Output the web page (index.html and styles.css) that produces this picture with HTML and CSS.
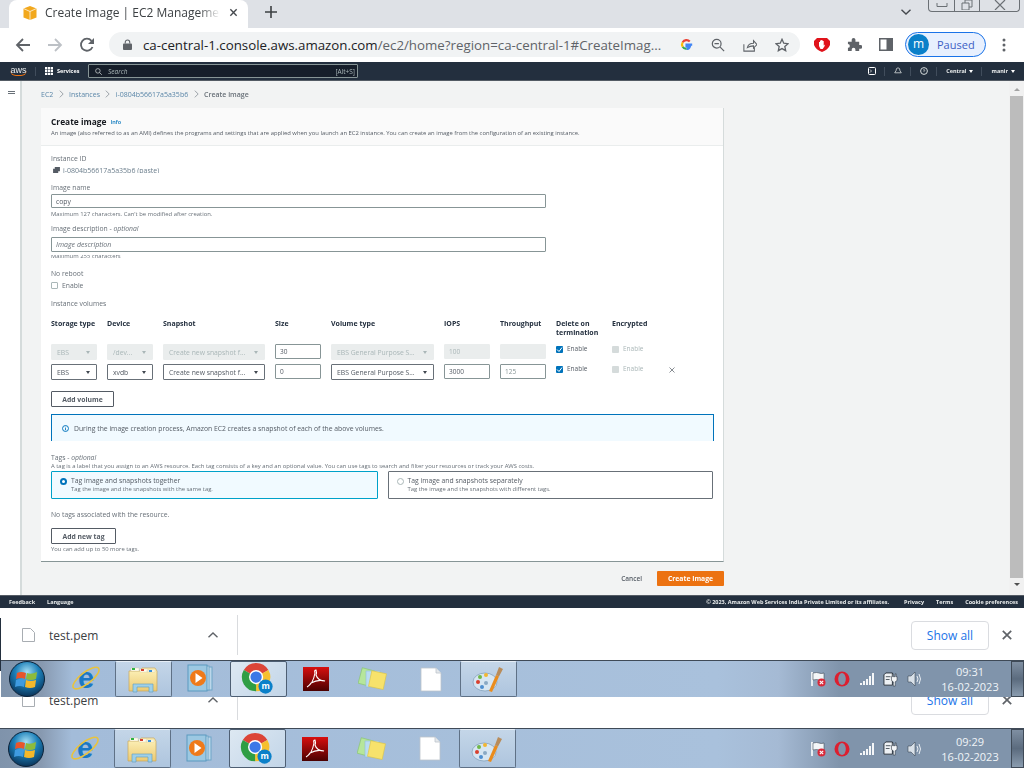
FILE: index.html
```html
<!DOCTYPE html>
<html lang="en">
<head>
<meta charset="utf-8">
<title>Create Image | EC2 Management Console</title>
<link rel="stylesheet" href="styles.css">
</head>
<body>
<svg class="defs" aria-hidden="true">
  <defs>
    <radialGradient id="orb" cx="50%" cy="30%" r="75%"><stop offset="0" stop-color="#a5def4"/><stop offset=".45" stop-color="#1b7fb8"/><stop offset="1" stop-color="#08294c"/></radialGradient>
    <linearGradient id="pdf" x1="0" y1="0" x2="0" y2="1"><stop offset="0" stop-color="#d80f0f"/><stop offset="1" stop-color="#4a0000"/></linearGradient>
    <linearGradient id="fold" x1="0" y1="0" x2="0" y2="1"><stop offset="0" stop-color="#fdf3bd"/><stop offset="1" stop-color="#ecca72"/></linearGradient>
    <symbol id="i-orb" viewBox="0 0 36 36">
      <circle cx="18" cy="18" r="17.500" fill="url(#orb)" stroke="#0c2238"/>
      <path d="M8 12q4-2 9 0l-1 6q-4-2-9 0z" fill="#e8552b"/><path d="M18 12q4 2 10-1l-1 7q-5 2-10 0z" fill="#8dbb3c"/>
      <path d="M7 19q4-2 9 0l-1 7q-4-2-9 0z" fill="#3f9be0"/><path d="M17 19q4 2 10 0l-1 7q-5 2-10 0z" fill="#f5b82a"/>
    </symbol>
    <symbol id="i-ie" viewBox="0 0 32 32">
      <text x="16" y="26" text-anchor="middle" class="svg-e">e</text>
      <ellipse cx="16" cy="15" rx="17" ry="6" transform="rotate(-38 16 15)" fill="none" stroke="#e9c33c" stroke-width="1.700"/>
    </symbol>
    <symbol id="i-folder" viewBox="0 0 30 28">
      <path d="M1 6h11l2-3h13l2 3v20H1z" fill="url(#fold)" stroke="#c9a85a" stroke-width=".7"/>
      <path d="M3 3h8v3H3zM12 4h8v3h-8zM19 5h8v2h-8z" fill="#fffdf0" stroke="#d5c9a0" stroke-width=".4"/>
      <rect x="4" y="3" width="3" height="2" fill="#2fb344"/><rect x="13" y="4" width="3" height="2" fill="#d8402e"/><rect x="21" y="5" width="3" height="2" fill="#3a8fd8"/>
      <path d="M5 19h20v8h-4v-5H9v5H5z" fill="#9fd0e8" stroke="#5c9cc0" stroke-width=".6"/>
    </symbol>
    <symbol id="i-wmp" viewBox="0 0 28 30">
      <rect x="8" y="3" width="17" height="23" fill="#bcd7ea" stroke="#6ea6c8"/><rect x="5" y="2" width="17" height="24" fill="#cde2f0" stroke="#6ea6c8"/>
      <rect x="1" y="1" width="19" height="26" fill="#9cc8e2" stroke="#5b9abf"/>
      <circle cx="11" cy="14" r="8" fill="#ef7a1a"/><path d="M8.500 9l7 5-7 5z" fill="#fff"/>
    </symbol>
    <symbol id="i-chrome" viewBox="0 0 36 36">
      <path d="M16 16L3 8.500A15 15 0 0 1 29 8.500Z" fill="#dc4437"/><path d="M16 16L29 8.500A15 15 0 0 1 16 31Z" fill="#f6c02d"/><path d="M16 16L16 31A15 15 0 0 1 3 8.500Z" fill="#2f9e44"/>
      <circle cx="16" cy="16" r="7.500" fill="#fff"/><circle cx="16" cy="16" r="6" fill="#3b78e7"/>
      <circle cx="26" cy="26" r="7.500" fill="#0b80c9"/><text x="26" y="29" text-anchor="middle" class="svg-m">m</text>
    </symbol>
    <symbol id="i-pdf" viewBox="0 0 26 24">
      <rect width="26" height="24" fill="url(#pdf)"/><path d="M4 20q6-3 8-14q-1-3 1-3q1 3 0 5q2 6 9 6q-7-2-14 2q-2 3-4 4z" fill="none" stroke="#fff" stroke-width="1.100"/>
    </symbol>
    <symbol id="i-sticky" viewBox="0 0 30 28">
      <rect x="2" y="4" width="13" height="16" transform="rotate(15 8 12)" fill="#b6e69b" stroke="#86c46e" stroke-width=".6"/>
      <rect x="8" y="6" width="14" height="16" fill="#b9dcf2" stroke="#8fbcd8" stroke-width=".6"/>
      <rect x="12" y="7" width="15" height="16" transform="rotate(12 19 15)" fill="#f7e26b" stroke="#dcc446" stroke-width=".6"/>
    </symbol>
    <symbol id="i-file" viewBox="0 0 22 25">
      <path d="M1 1h15l5 5v18H1z" fill="#fff" stroke="#bcc4cc" stroke-width=".8"/><path d="M16 1v5h5" fill="#e4e8ec" stroke="#bcc4cc" stroke-width=".8"/>
    </symbol>
    <symbol id="i-paint" viewBox="0 0 32 28">
      <ellipse cx="13" cy="17" rx="12" ry="9" fill="#d7e6f2" stroke="#7d9cb6" stroke-width=".7"/>
      <circle cx="6" cy="17" r="2" fill="#d8402e"/><circle cx="8" cy="12" r="2" fill="#6fb84a"/><circle cx="14" cy="10" r="2" fill="#f2b632"/><circle cx="14" cy="18" r="2" fill="#8aa9c4"/><circle cx="10" cy="22" r="2" fill="#4f8fd0"/>
      <path d="M17 26L24 10l3 1.500L20 27z" fill="#e98c1e"/><path d="M24 10l3-8 4 2-4 7.500z" fill="#b98c5a"/>
    </symbol>
    <symbol id="i-flag" viewBox="0 0 16 16">
      <path d="M2 1v14" stroke="#fff" stroke-width="1.600"/><path d="M3 2q4-1 6 0t5 0v7q-3 1-5 0t-6 0z" fill="#f4f6f8" stroke="#2b3440" stroke-width=".5"/>
      <circle cx="11.500" cy="11.500" r="4" fill="#d8293a"/><path d="M9.800 9.800l3.400 3.400M13.200 9.800l-3.400 3.400" stroke="#fff" stroke-width="1.100"/>
    </symbol>
    <symbol id="i-opera" viewBox="0 0 16 16"><circle cx="8" cy="8" r="7.500" fill="#dc1f2f"/><ellipse cx="8" cy="8" rx="3.800" ry="6" fill="#8193a9"/></symbol>
    <symbol id="i-signal" viewBox="0 0 16 12"><path d="M1 10h2v2H1zM4 8h2v4H4zM7 6h2v6H7zM10 3h2v9h-2zM13 0h2v12h-2z" fill="#f4f6f8"/></symbol>
    <symbol id="i-power" viewBox="0 0 16 16"><path d="M1 3l2-2h7v13H1z" fill="#eef2f5" stroke="#27303a"/><path d="M3 5h5M3 8h4" stroke="#27303a" stroke-width=".8"/><path d="M9 5h1V2h1v3h2V2h1v3h1v4l-2 1.500V15h-2v-4.500L9 9z" fill="#f4f6f8" stroke="#27303a" stroke-width=".6"/></symbol>
    <symbol id="i-sound" viewBox="0 0 16 14"><path d="M1 4h3l4-4v14l-4-4H1z" fill="#d8e0e8" stroke="#2b3440" stroke-width=".5"/><path d="M10 4q2 3 0 6M12 2q3 5 0 10" fill="none" stroke="#e8edf2" stroke-width="1"/></symbol>
  </defs>
</svg>
<i class="edge"></i>

<header class="tabstrip">
  <div class="tab">
    <svg class="tab-icon" viewBox="0 0 16 16"><path d="M8 1l6.500 2.500v9L8 15l-6.500-2.500v-9z" fill="#f2a81d"/><path d="M8 6.500V15M1.500 3.500L8 6.500l6.500-3" stroke="#fff" stroke-width=".7" fill="none"/></svg>
    <span class="tab-title">Create Image | EC2 Management Console</span>
    <svg class="tab-close" viewBox="0 0 10 10"><path d="M1.500 1.500l7 7M8.500 1.500l-7 7" stroke="#45494e" stroke-width="1.500"/></svg>
  </div>
  <svg class="new-tab" viewBox="0 0 12 12"><path d="M6 0v12M0 6h12" stroke="#3c4043" stroke-width="1.600"/></svg>
  <svg class="tab-search" viewBox="0 0 10 6"><path d="M.5 .8L5 5l4.500-4.200" fill="none" stroke="#45494e" stroke-width="1.400"/></svg>
  <div class="winctl">
    <span class="winbtn winbtn-first"><svg viewBox="0 0 12 6"><path d="M1 1v3.500h10V1" fill="none" stroke="#6b7075"/></svg></span>
    <span class="winbtn"><svg viewBox="0 0 12 10"><path d="M1 3h7v7H1zM4 3V0h7v7H8" fill="none" stroke="#6b7075"/></svg></span>
    <span class="winbtn winbtn-wide"><svg viewBox="0 0 12 10"><path d="M1 0l10 10M11 0L1 10" stroke="#6b7075" stroke-width="1.200"/></svg></span>
  </div>
</header>

<nav class="toolbar">
  <svg class="tb-icon tb-back" viewBox="0 0 16 16"><path d="M15 8H2M8 2L2 8l6 6" fill="none" stroke="#5f6368" stroke-width="1.800"/></svg>
  <svg class="tb-icon tb-fwd" viewBox="0 0 16 16"><path d="M1 8h13M8 2l6 6-6 6" fill="none" stroke="#bdc1c6" stroke-width="1.800"/></svg>
  <svg class="tb-icon tb-reload" viewBox="0 0 16 16"><path d="M13.500 10A6 6 0 1 1 12.500 3.800" fill="none" stroke="#5f6368" stroke-width="1.800"/><path d="M15 1v6H9z" fill="#5f6368"/></svg>
  <div class="omnibox">
    <svg class="lock" viewBox="0 0 10 12"><path d="M2.500 5V3.500a2.500 2.500 0 0 1 5 0V5" fill="none" stroke="#5f6368" stroke-width="1.200"/><rect y="5" width="10" height="7" rx="1" fill="#5f6368"/></svg>
    <span class="url"><b class="url-host">ca-central-1.console.aws.amazon.com</b>/ec2/home?region=ca-central-1#CreateImag...</span>
    <svg class="omni-g" viewBox="0 0 16 16"><path d="M15 8.200H8v2.600h4A4.200 4.200 0 0 1 8 13.500" fill="none" stroke="#4285f4" stroke-width="2.600"/><path d="M8 13.500A5.500 5.500 0 0 1 3.300 10.800" fill="none" stroke="#34a853" stroke-width="2.600"/><path d="M3.300 10.800a5.500 5.500 0 0 1 0-5.600" fill="none" stroke="#fbbc05" stroke-width="2.600"/><path d="M3.300 5.200A5.500 5.500 0 0 1 12 4.300" fill="none" stroke="#ea4335" stroke-width="2.600"/></svg>
    <svg class="omni-i" viewBox="0 0 16 16"><circle cx="6.500" cy="6.500" r="5" fill="none" stroke="#5f6368" stroke-width="1.400"/><path d="M10.500 10.500L15 15M4 6.500h5" stroke="#5f6368" stroke-width="1.400"/></svg>
    <svg class="omni-i" viewBox="0 0 16 16"><path d="M1 7v8h12v-4M5 11q1-5 7-5V3l4 4.500-4 4V9q-4 0-7 2z" fill="none" stroke="#5f6368" stroke-width="1.200"/></svg>
    <svg class="omni-i" viewBox="0 0 16 16"><path d="M8 1.500l2 4.500 4.800.5-3.600 3.200 1 4.800L8 12.100l-4.200 2.400 1-4.800L1.200 6.500 6 6z" fill="none" stroke="#5f6368" stroke-width="1.500"/></svg>
  </div>
  <svg class="ext ext-ub" viewBox="0 0 16 14"><path d="M3 0h10l3 3v4q-2 5-8 7q-6-2-8-7V3z" fill="#e0131b"/><path d="M5 8V4h1v2.500V2.500h1.200V6V2h1.300v4V3h1.200v4.500l1-1v1.500l-2 3H6.500z" fill="#fff"/></svg>
  <svg class="ext ext-puzzle" viewBox="0 0 16 16"><path d="M1 5h4V3a2 2 0 0 1 4 0v2h4v3.500h1.500a2 2 0 0 1 0 4H13V15H9v-1.500a2 2 0 0 0-4 0V15H1v-3.500a2 2 0 0 0 0-4z" fill="#5f6368"/></svg>
  <svg class="ext ext-panel" viewBox="0 0 14 13"><path d="M0 0h14v13H0z" fill="#5f6368"/><path d="M1.500 1.500h6v10h-6z" fill="#fff"/></svg>
  <div class="profile"><span class="avatar">m</span><span class="paused">Paused</span></div>
  <svg class="kebab" viewBox="0 0 4 14"><circle cx="2" cy="2" r="1.500" fill="#5f6368"/><circle cx="2" cy="7" r="1.500" fill="#5f6368"/><circle cx="2" cy="12" r="1.500" fill="#5f6368"/></svg>
</nav>

<div class="aws-nav">
  <span class="aws-logo">aws</span>
  <i class="nav-sep nav-sep-logo"></i>
  <svg class="grid-icon" viewBox="0 0 9 9"><path d="M0 0h2.500v2.500H0zM3.200 0h2.500v2.500H3.200zM6.400 0H9v2.500H6.400zM0 3.200h2.500v2.500H0zM3.200 3.200h2.500v2.500H3.200zM6.400 3.200H9v2.500H6.400zM0 6.400h2.500V9H0zM3.200 6.400h2.500V9H3.200zM6.400 6.400H9V9H6.400z" fill="#fff"/></svg>
  <span class="nav-services">Services</span>
  <div class="nav-search">
    <svg class="nav-search-icon" viewBox="0 0 8 8"><circle cx="3.300" cy="3.300" r="2.600" fill="none" stroke="#d5dbdb" stroke-width=".8"/><path d="M5.200 5.200L7.800 7.800" stroke="#d5dbdb" stroke-width=".8"/></svg>
    <span class="nav-search-ph">Search</span>
    <span class="nav-search-key">[Alt+S]</span>
  </div>
  <div class="nav-right">
    <svg class="nav-ico" viewBox="0 0 8 8"><rect x=".5" y=".5" width="7" height="7" rx="1" fill="none" stroke="#fff"/><path d="M2 2.500L3.500 4 2 5.500" fill="none" stroke="#fff" stroke-width=".7"/></svg>
    <i class="nav-sep"></i>
    <svg class="nav-ico" viewBox="0 0 8 8"><path d="M4 .8q2 0 2 3l1.300 2H.7L2 3.800q0-3 2-3z" fill="none" stroke="#d5dbdb" stroke-width=".8"/></svg>
    <i class="nav-sep"></i>
    <svg class="nav-ico" viewBox="0 0 8 8"><circle cx="4" cy="4" r="3.400" fill="none" stroke="#d5dbdb"/><path d="M3 3.200q1-1.200 2 0l-1 1.300v.6" fill="none" stroke="#d5dbdb" stroke-width=".7"/></svg>
    <i class="nav-sep"></i>
    <span class="nav-menu">Central<i class="nav-caret"></i></span>
    <i class="nav-sep"></i>
    <span class="nav-menu">manir<i class="nav-caret"></i></span>
  </div>
</div>

<div class="console">
  <aside class="sidenav"><i class="burger"></i></aside>
  <main class="content">
    <div class="crumbs">
      <a class="crumb">EC2</a><svg class="crumb-sep" viewBox="0 0 6 9"><path d="M1 .5l4 4-4 4" fill="none" stroke="#8a9299"/></svg>
      <a class="crumb">Instances</a><svg class="crumb-sep" viewBox="0 0 6 9"><path d="M1 .5l4 4-4 4" fill="none" stroke="#8a9299"/></svg>
      <a class="crumb">i-0804b56617a5a35b6</a><svg class="crumb-sep" viewBox="0 0 6 9"><path d="M1 .5l4 4-4 4" fill="none" stroke="#8a9299"/></svg>
      <span class="crumb-now">Create image</span>
    </div>
    <section class="panel">
      <div class="panel-head">
        <h1 class="panel-title">Create image <a class="info">Info</a></h1>
        <p class="panel-desc">An image (also referred to as an AMI) defines the programs and settings that are applied when you launch an EC2 instance. You can create an image from the configuration of an existing instance.</p>
      </div>
      <div class="panel-body">
        <div class="label">Instance ID</div>
        <div class="instance-val"><svg class="copy-ico" viewBox="0 0 8 7"><path d="M2 0h6v5H6v2H0V2h2z" fill="#545b64"/></svg><span class="instance-id">i-0804b56617a5a35b6 (paste)</span></div>
        <div class="label label-name">Image name</div>
        <div class="input input-name">copy</div>
        <div class="hint hint-name">Maximum 127 characters. Can't be modified after creation.</div>
        <div class="label label-desc">Image description - <em>optional</em></div>
        <div class="input input-desc"><em>Image description</em></div>
        <div class="hint hint-clip"><span>Maximum 255 characters</span></div>
        <div class="label label-reboot">No reboot</div>
        <label class="check-row"><i class="box"></i>Enable</label>
        <div class="label label-vol">Instance volumes</div>

        <div class="vol-grid">
          <div class="th">Storage type</div><div class="th">Device</div><div class="th">Snapshot</div><div class="th">Size</div><div class="th">Volume type</div><div class="th">IOPS</div><div class="th">Throughput</div><div class="th">Delete on termination</div><div class="th">Encrypted</div><div></div>

          <div class="sel off"><span>EBS</span><i></i></div><div class="sel off"><span>/dev...</span><i></i></div><div class="sel off"><span>Create new snapshot f...</span><i></i></div><div class="num">30</div><div class="sel off"><span>EBS General Purpose S...</span><i></i></div><div class="num off">100</div><div class="num off"></div>
          <div class="cb"><i class="tick"><svg viewBox="0 0 7 7"><path d="M1 3.500l2 2 3-4" fill="none" stroke="#fff"/></svg></i>Enable</div><div class="cb cb-off"><i class="dis"></i>Enable</div><div></div>

          <div class="sel"><span>EBS</span><i></i></div><div class="sel"><span>xvdb</span><i></i></div><div class="sel"><span>Create new snapshot f...</span><i></i></div><div class="num">0</div><div class="sel"><span>EBS General Purpose S...</span><i></i></div><div class="num">3000</div><div class="num muted">125</div>
          <div class="cb"><i class="tick"><svg viewBox="0 0 7 7"><path d="M1 3.500l2 2 3-4" fill="none" stroke="#fff"/></svg></i>Enable</div><div class="cb cb-off"><i class="dis"></i>Enable</div><div class="rm"><svg viewBox="0 0 6 6"><path d="M.5 .5l5 5M5.500 .5l-5 5" stroke="#545b64" stroke-width=".7"/></svg></div>
        </div>

        <button class="btn btn-vol">Add volume</button>
        <div class="flash"><svg class="flash-ico" viewBox="0 0 8 8"><circle cx="4" cy="4" r="3.400" fill="none" stroke="#0073bb" stroke-width="1.100"/><path d="M4 3.500V6M4 2v.8" stroke="#0073bb"/></svg>During the image creation process, Amazon EC2 creates a snapshot of each of the above volumes.</div>

        <div class="label label-tags">Tags - <em>optional</em></div>
        <div class="hint hint-tags">A tag is a label that you assign to an AWS resource. Each tag consists of a key and an optional value. You can use tags to search and filter your resources or track your AWS costs.</div>
        <div class="tiles">
          <div class="tile tile-on"><i class="radio radio-on"></i><div><div class="tile-title">Tag image and snapshots together</div><div class="tile-sub">Tag the image and the snapshots with the same tag.</div></div></div>
          <div class="tile"><i class="radio"></i><div><div class="tile-title">Tag image and snapshots separately</div><div class="tile-sub">Tag the image and the snapshots with different tags.</div></div></div>
        </div>
        <div class="no-tags">No tags associated with the resource.</div>
        <button class="btn btn-tag">Add new tag</button>
        <div class="hint hint-more">You can add up to 50 more tags.</div>
      </div>
    </section>
    <div class="actions"><a class="cancel">Cancel</a><button class="primary">Create Image</button></div>
  </main>
  <div class="scrollbar"><i class="sb-up"></i><i class="sb-thumb"></i><i class="sb-down"></i></div>
</div>

<footer class="aws-foot">
  <span>Feedback</span><span class="foot-lang">Language</span>
  <span class="foot-copy">© 2023, Amazon Web Services India Private Limited or its affiliates.</span>
  <span class="foot-link">Privacy</span><span class="foot-link2">Terms</span><span class="foot-link2">Cookie preferences</span>
</footer>

<div class="downloads">
  <svg class="dl-file" viewBox="0 0 13 14"><path d="M.5 .5h8l4 4v9H.5z" fill="#fff" stroke="#a8adb2"/></svg>
  <span class="dl-name">test.pem</span>
  <svg class="dl-chev" viewBox="0 0 10 6"><path d="M.5 5.200L5 1l4.500 4.200" fill="none" stroke="#5f6368" stroke-width="1.400"/></svg>
  <i class="dl-sep"></i>
  <span class="showall">Show all</span>
  <svg class="dl-x" viewBox="0 0 10 10"><path d="M.8 .8l8.400 8.400M9.200 .8L.8 9.200" stroke="#5f6368" stroke-width="1.700"/></svg>
</div>

<div class="taskbar taskbar-a">
  <svg class="orb"><use href="#i-orb"/></svg>
  <div class="tb-apps">
    <span class="app"><svg class="ico-ie"><use href="#i-ie"/></svg></span>
    <span class="app app-open"><svg class="ico-folder"><use href="#i-folder"/></svg></span>
    <span class="app"><svg class="ico-wmp"><use href="#i-wmp"/></svg></span>
    <span class="app app-active"><svg class="ico-chrome"><use href="#i-chrome"/></svg></span>
    <span class="app"><svg class="ico-pdf"><use href="#i-pdf"/></svg></span>
    <span class="app"><svg class="ico-sticky"><use href="#i-sticky"/></svg></span>
    <span class="app"><svg class="ico-file"><use href="#i-file"/></svg></span>
    <span class="app app-open"><svg class="ico-paint"><use href="#i-paint"/></svg></span>
  </div>
  <div class="tray">
    <svg class="tr tr-flag"><use href="#i-flag"/></svg><svg class="tr tr-opera"><use href="#i-opera"/></svg><svg class="tr tr-signal"><use href="#i-signal"/></svg><svg class="tr tr-power"><use href="#i-power"/></svg><svg class="tr tr-sound"><use href="#i-sound"/></svg>
    <div class="clock"><span>09:31</span><span>16-02-2023</span></div>
    <i class="show-desktop"></i>
  </div>
</div>

<div class="dl-clip">
  <div class="downloads downloads-b">
    <svg class="dl-file" viewBox="0 0 13 14"><path d="M.5 .5h8l4 4v9H.5z" fill="#fff" stroke="#a8adb2"/></svg>
    <span class="dl-name">test.pem</span>
    <svg class="dl-chev" viewBox="0 0 10 6"><path d="M.5 5.200L5 1l4.500 4.200" fill="none" stroke="#5f6368" stroke-width="1.400"/></svg>
    <i class="dl-sep"></i>
    <span class="showall">Show all</span>
    <svg class="dl-x" viewBox="0 0 10 10"><path d="M.8 .8l8.400 8.400M9.200 .8L.8 9.200" stroke="#5f6368" stroke-width="1.700"/></svg>
  </div>
</div>

<div class="taskbar taskbar-b">
  <svg class="orb"><use href="#i-orb"/></svg>
  <div class="tb-apps">
    <span class="app"><svg class="ico-ie"><use href="#i-ie"/></svg></span>
    <span class="app app-open"><svg class="ico-folder"><use href="#i-folder"/></svg></span>
    <span class="app"><svg class="ico-wmp"><use href="#i-wmp"/></svg></span>
    <span class="app app-active"><svg class="ico-chrome"><use href="#i-chrome"/></svg></span>
    <span class="app"><svg class="ico-pdf"><use href="#i-pdf"/></svg></span>
    <span class="app"><svg class="ico-sticky"><use href="#i-sticky"/></svg></span>
    <span class="app"><svg class="ico-file"><use href="#i-file"/></svg></span>
    <span class="app app-open"><svg class="ico-paint"><use href="#i-paint"/></svg></span>
  </div>
  <div class="tray">
    <svg class="tr tr-flag"><use href="#i-flag"/></svg><svg class="tr tr-opera"><use href="#i-opera"/></svg><svg class="tr tr-signal"><use href="#i-signal"/></svg><svg class="tr tr-power"><use href="#i-power"/></svg><svg class="tr tr-sound"><use href="#i-sound"/></svg>
    <div class="clock"><span>09:29</span><span>16-02-2023</span></div>
    <i class="show-desktop"></i>
  </div>
</div>
</body>
</html>
```

FILE: styles.css
```css
* { box-sizing: border-box; }
html, body { margin: 0; padding: 0; }
body { position: relative; width: 1024px; height: 768px; overflow: hidden; background: #fff; font-family: "Open Sans", "Noto Sans", sans-serif; color: #16191f; }
i { display: block; font-style: normal; }
p, h1 { margin: 0; }
.defs { width: 0; height: 0; display: block; }
.svg-m { font: 700 9px "Open Sans", sans-serif; fill: #fff; }
.svg-e { font: 700 31px "Liberation Sans", sans-serif; fill: #1b78c4; }
.edge { position: absolute; left: 0; top: 618px; width: 1px; height: 53px; background: #232f3e; }

/* browser chrome */
.tabstrip { height: 28px; background: #dee1e6; display: flex; align-items: flex-start; position: relative; }
.tab { width: 239px; height: 28px; margin-left: 9px; background: #fff; border-radius: 8px 8px 0 0; display: flex; align-items: center; padding: 0 0 3px 13px; }
.tab-icon { width: 16px; height: 16px; flex: none; }
.tab-title { width: 175px; margin-left: 7px; font: 12px "Open Sans", sans-serif; color: #3c4043; white-space: nowrap; overflow: hidden; -webkit-mask-image: linear-gradient(to right, #000 88%, transparent); mask-image: linear-gradient(to right, #000 88%, transparent); }
.tab-close { width: 9px; height: 9px; margin-left: 9px; flex: none; }
.new-tab { width: 12px; height: 12px; margin: 6px 0 0 17px; flex: none; }
.tab-search { width: 10px; height: 6px; margin: 9px 0 0 624px; flex: none; }
.winctl { position: absolute; top: 0; left: 928px; width: 92px; height: 12px; display: flex; border: 1px solid #6b7075; border-top: 0; border-radius: 0 0 4px 4px; }
.winbtn { width: 25px; display: flex; align-items: flex-end; justify-content: center; padding-bottom: 1px; border-left: 1px solid #6b7075; }
.winbtn svg { width: 12px; height: 10px; }
.winbtn-first { border-left: 0; }
.winbtn-wide { flex: 1; }

.toolbar { height: 34px; background: #fff; display: flex; align-items: center; padding-bottom: 1px; }
.tb-icon { width: 16px; height: 16px; flex: none; }
.tb-back { margin-left: 15px; }
.tb-fwd { margin-left: 16px; }
.tb-reload { margin-left: 16px; }
.omnibox { width: 691px; height: 25px; margin-left: 14px; background: #f1f3f4; border-radius: 13px; display: flex; align-items: center; flex: none; padding-left: 14px; }
.lock { width: 9px; height: 11px; flex: none; }
.url { width: 521px; margin-left: 11px; font: 13.300px "Open Sans", sans-serif; color: #5f6368; white-space: nowrap; flex: none; }
.url-host { font-weight: 400; color: #202124; }
.omni-g { width: 13px; height: 13px; margin-left: 16px; flex: none; }
.omni-i { width: 14px; height: 14px; margin-left: 18px; flex: none; }
.ext { flex: none; }
.ext-ub { width: 16px; height: 14px; margin-left: 14px; }
.ext-puzzle { width: 15px; height: 15px; margin-left: 17px; }
.ext-panel { width: 14px; height: 13px; margin-left: 17px; }
.profile { width: 81px; height: 25px; margin-left: 12px; border: 1px solid #1a73e8; border-radius: 13px; background: #e8f0fe; display: flex; align-items: center; padding-left: 2px; flex: none; }
.avatar { width: 21px; height: 21px; border-radius: 50%; background: #0b80c9; color: #fff; font: 12px/20px "Open Sans", sans-serif; text-align: center; flex: none; }
.paused { margin-left: 8px; font: 11px "Open Sans", sans-serif; color: #3d5ec4; }
.kebab { width: 4px; height: 14px; margin-left: 16px; flex: none; }

/* aws nav */
.aws-nav { height: 19px; background: #232f3e; border-bottom: 1px solid #545b64; display: flex; align-items: center; color: #fff; position: relative; padding-left: 10px; font-size: 5.500px; filter: blur(.25px); }
.aws-logo { font: 400 9px/9px "Liberation Sans", sans-serif; width: 17px; color: #eaeded; border-bottom: 1px solid #ec7211; border-radius: 0 0 6px 6px; text-align: center; }
.nav-sep { width: 1px; height: 9px; background: #414d5c; flex: none; }
.nav-sep-logo { margin-left: 8px; }
.grid-icon { width: 8px; height: 8px; margin-left: 9px; flex: none; }
.nav-services { margin-left: 4px; width: 31px; font-weight: 700; flex: none; }
.nav-search { width: 270px; height: 14px; background: #161e2a; border: 1px solid #879596; border-radius: 1px; display: flex; align-items: center; padding: 0 2px 0 6px; flex: none; color: #aab7b8; font-size: 6.500px; }
.nav-search-icon { width: 7px; height: 7px; flex: none; }
.nav-search-ph { margin-left: 6px; font-style: italic; }
.nav-search-key { margin-left: auto; }
.nav-right { display: flex; align-items: center; margin-left: auto; padding-right: 9px; }
.nav-ico { width: 8px; height: 8px; flex: none; }
.nav-right .nav-sep { margin: 0 9px 0 8px; }
.nav-menu { display: flex; align-items: center; font-weight: 700; color: #eaeded; }
.nav-caret { width: 0; height: 0; margin-left: 3px; border: 2px solid transparent; border-top: 3px solid #fff; border-bottom: 0; }

/* console */
.console { height: 514px; display: flex; background: #f2f3f3; filter: blur(.25px); }
.sidenav { width: 22px; background: #fff; border-right: 2px solid #d5dbdb; flex: none; padding: 10px 0 0 8px; }
.burger { width: 7px; height: 3px; border-top: 1px solid #687078; border-bottom: 1px solid #687078; }
.content { width: 987px; flex: none; padding-left: 19px; }
.crumbs { height: 27px; display: flex; align-items: center; font-size: 7px; color: #5a86a8; padding-bottom: 1px; }
.crumb { white-space: nowrap; }
.crumb-sep { width: 5px; height: 8px; margin: 0 5.400px; flex: none; }
.crumb-now { color: #687078; font-weight: 600; }
.panel { width: 683px; height: 454px; background: #fff; border-right: 1px solid #d5dbdb; border-bottom: 1px solid #879596; }
.panel-head { height: 38px; background: #fafafa; border-bottom: 1px solid #eaeded; padding: 9px 10px 0; }
.panel-title { font-size: 8.400px; line-height: 10px; font-weight: 700; color: #16191f; }
.info { margin-left: 2px; font-size: 5.500px; font-weight: 600; color: #0073bb; vertical-align: 1px; }
.panel-desc { margin-top: 2px; font-size: 5.850px; line-height: 9px; color: #545b64; white-space: nowrap; }
.panel-body { padding: 8px 10px 0; }
.label { font-size: 6.800px; line-height: 10px; color: #687078; }
.instance-val { height: 7px; margin-top: 2px; overflow: hidden; display: flex; font-size: 7px; line-height: 10px; color: #6b7e8c; padding-left: 2px; }
.copy-ico { width: 7px; height: 6px; margin: 1px 3px 0 0; flex: none; }
.instance-id { white-space: nowrap; }
.label-name { margin-top: 10px; }
.input { width: 495px; border: 1px solid #879596; border-radius: 1px; background: #fff; display: flex; align-items: center; padding-left: 4px; font-size: 6.800px; color: #545b64; }
.input-name { height: 14px; margin-top: 1px; }
.input-desc { height: 15px; margin-top: 3px; color: #687078; font-size: 7px; }
.hint { font-size: 5.900px; line-height: 9px; color: #687078; white-space: nowrap; }
.hint-name { margin-top: 2px; }
.hint-clip { height: 6px; margin-top: 3px; overflow: hidden; display: flex; align-items: flex-end; }
.label-desc { margin-top: 5px; }
.label-reboot { margin-top: 8px; }
.check-row { height: 10px; margin-top: 1px; display: flex; align-items: center; font-size: 6.800px; color: #687078; }
.box { width: 7px; height: 7px; margin-right: 4px; border: 1px solid #aab7b8; border-radius: 1px; background: #fff; }
.label-vol { margin-top: 9px; }
.vol-grid { display: grid; grid-template-columns: 46px 46px 102px 46px 103px 46px 46px 46px 46px 46px; grid-template-rows: 21px 16px 16px; column-gap: 10px; row-gap: 4px; margin-top: 10px; }
.th { font-size: 7px; line-height: 9px; font-weight: 700; color: #232f3e; }
.sel { height: 16px; border: 1px solid #687078; border-radius: 1px; background: #fff; display: flex; align-items: center; justify-content: space-between; padding: 0 6px 0 5px; font-size: 6.800px; color: #545b64; white-space: nowrap; }
.sel i { width: 0; height: 0; border: 2.500px solid transparent; border-top: 3px solid #414750; border-bottom: 0; flex: none; }
.sel.off { background: #eaeded; border-color: #eaeded; color: #aab7b8; }
.sel.off i { border-top-color: #aab7b8; }
.num { height: 15px; border: 1px solid #879596; border-radius: 1px; background: #fff; display: flex; align-items: center; padding-left: 4px; font-size: 6.500px; color: #545b64; }
.num.off { background: #eaeded; border-color: #eaeded; color: #aab7b8; }
.num.muted { color: #879596; }
.cb { display: flex; align-items: flex-start; font-size: 6.500px; line-height: 10px; color: #545b64; white-space: nowrap; }
.tick { width: 7px; height: 7px; margin: 2px 4px 0 0; background: #0073bb; border-radius: 1px; flex: none; }
.tick svg { display: block; width: 7px; height: 7px; }
.dis { width: 7px; height: 7px; margin: 2px 4px 0 0; background: #d5dbdb; border-radius: 1px; flex: none; }
.cb-off { color: #aab7b8; }
.rm { padding: 3px 0 0 1px; }
.rm svg { display: block; width: 6px; height: 6px; }
.btn { display: block; height: 16px; margin: 0; padding: 0; background: #fff; border: 1px solid #545b64; border-radius: 1px; font: 700 6.800px "Open Sans", sans-serif; color: #545b64; }
.btn-vol { width: 63px; margin-top: 11px; }
.flash { width: 663px; height: 27px; margin-top: 7px; background: #f1faff; border: 1px solid #0073bb; border-bottom: 0; display: flex; align-items: center; padding-left: 10px; font-size: 6.800px; color: #545b64; white-space: nowrap; }
.flash-ico { width: 7px; height: 7px; margin-right: 5px; flex: none; }
.label-tags { margin-top: 12px; line-height: 9px; }
.hint-tags { margin-top: 0; line-height: 9px; }
.tiles { display: flex; gap: 10px; margin-top: 0; }
.tile { width: 326px; height: 28px; border: 1px solid #687078; border-radius: 1px; display: flex; padding: 4px 0 0 8px; }
.tile-on { width: 327px; background: #f1faff; border-color: #00a1c9; }
.radio { width: 7px; height: 7px; margin: 2px 4px 0 0; border: 1px solid #aab7b8; border-radius: 50%; flex: none; }
.radio-on { border: 2px solid #0073bb; background: #fff; }
.tile-title { font-size: 6.800px; line-height: 9px; color: #545b64; white-space: nowrap; }
.tile-sub { font-size: 5.870px; line-height: 8px; color: #687078; white-space: nowrap; }
.no-tags { margin-top: 11px; font-size: 6.800px; line-height: 10px; color: #687078; }
.btn-tag { width: 65px; margin-top: 8px; }
.hint-more { margin-top: 1px; font-size: 5.870px; line-height: 9px; }
.actions { width: 683px; height: 33px; display: flex; align-items: center; justify-content: flex-end; padding-bottom: 1px; }
.cancel { font-size: 6.500px; font-weight: 600; color: #545b64; margin-right: 15px; }
.primary { width: 67px; height: 15px; padding: 0; background: #ec7211; border: 0; border-radius: 1px; font: 700 6.800px "Open Sans", sans-serif; color: #fff; }
.scrollbar { width: 15px; flex: none; background: #f1f1f1; display: flex; flex-direction: column; align-items: center; }
.sb-up { width: 0; height: 0; margin-top: 7px; border: 3px solid transparent; border-bottom: 3px solid #a3a3a3; border-top: 0; }
.sb-thumb { width: 13px; height: 482px; margin-top: 5px; background: #bcbcbc; }
.sb-down { width: 0; height: 0; margin-top: 5px; border: 3px solid transparent; border-top: 3px solid #505050; border-bottom: 0; }

.aws-foot { height: 13px; margin-bottom: 2px; background: #232f3e; border-top: 1px solid #545b64; display: flex; align-items: center; color: #eaeded; font-size: 5.500px; font-weight: 700; padding: 0 6px 0 9px; white-space: nowrap; filter: blur(.25px); }
.foot-lang { margin-left: 12px; }
.foot-copy { margin-left: auto; }
.foot-link { margin-left: 15px; }
.foot-link2 { margin-left: 12px; }

/* downloads */
.downloads { height: 50px; background: #fff; display: flex; align-items: center; }
.dl-file { width: 13px; height: 14px; margin-left: 22px; flex: none; }
.dl-name { width: 149px; margin-left: 14px; font-size: 12px; color: #3c4043; flex: none; }
.dl-chev { width: 10px; height: 6px; margin-left: 10px; flex: none; }
.dl-sep { width: 1px; height: 40px; margin-left: 19px; background: #d9dbde; flex: none; }
.showall { width: 78px; height: 29px; margin-left: 673px; border: 1px solid #dadce0; border-radius: 4px; display: flex; align-items: center; justify-content: center; font-size: 12px; color: #1a73e8; flex: none; }
.dl-x { width: 10px; height: 10px; margin-left: 13px; flex: none; }
.dl-clip { height: 31px; overflow: hidden; background: #fff; }
.downloads-b { margin-top: -22px; }

/* taskbars */
.taskbar { display: flex; align-items: center; background: linear-gradient(to right, #7f93ab 0%, #8799b0 4%, #a3bcd9 7%, #a9c1dc 70%, #a5bad4 76%, #8094ab 82%, #8094ab 100%); border-top: 1px solid #3f4a57; }
.taskbar-a { height: 37px; margin-left: 1px; }
.taskbar-b { height: 40px; }
.orb { width: 36px; height: 36px; margin-left: 8px; flex: none; }
.tb-apps { display: flex; align-items: center; height: 100%; margin-left: 12px; flex: none; }
.app { width: 57.500px; height: 100%; display: flex; align-items: center; justify-content: center; flex: none; }
.app-open { background: linear-gradient(to bottom, #c4d6e8, #aec5de); border: 1px solid #5f7186; border-top-color: #e6eef6; border-radius: 2px; }
.app-active { background: linear-gradient(135deg, #dde8f2, #c2d5e8); border: 1px solid #4e5f73; border-radius: 2px; }
.ico-ie { width: 30px; height: 30px; }
.ico-folder { width: 30px; height: 28px; }
.ico-wmp { width: 28px; height: 30px; }
.ico-chrome { width: 34px; height: 34px; }
.ico-pdf { width: 26px; height: 24px; }
.ico-sticky { width: 30px; height: 28px; }
.ico-file { width: 22px; height: 25px; }
.ico-paint { width: 32px; height: 28px; }
.tray { display: flex; align-items: center; margin-left: auto; height: 100%; flex: none; }
.tr { flex: none; }
.tr-flag { width: 16px; height: 16px; }
.tr-opera { width: 16px; height: 16px; margin-left: 8px; }
.tr-signal { width: 16px; height: 12px; margin-left: 9px; }
.tr-power { width: 15px; height: 15px; margin-left: 8px; }
.tr-sound { width: 16px; height: 14px; margin-left: 9px; }
.clock { width: 66px; margin-left: 14px; display: flex; flex-direction: column; align-items: center; font: 11px/15px "Open Sans", sans-serif; color: #f0f4f8; flex: none; }
.show-desktop { width: 13px; height: 100%; margin-left: 8px; background: linear-gradient(to bottom, #7f8fa2, #5b6b7e 50%, #8a9caf); border: 1px solid #3f4a57; flex: none; }
```
